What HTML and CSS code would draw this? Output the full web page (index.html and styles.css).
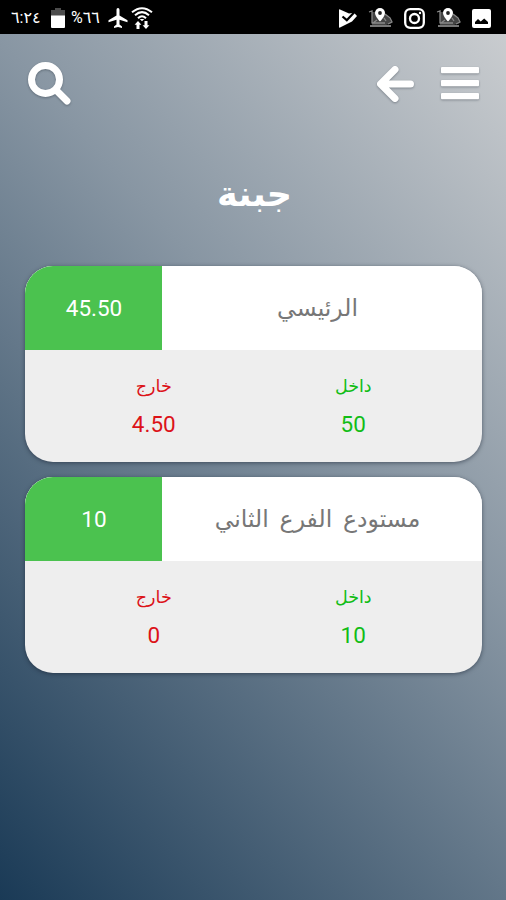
FILE: index.html
```html
<!DOCTYPE html>
<html lang="ar" dir="rtl">
<head>
<meta charset="utf-8">
<title>جبنة</title>
<link rel="stylesheet" href="styles.css">
</head>
<body>
<div class="status">
  <div class="status-group">
    <span class="time">٦:٢٤</span>
    <svg class="battery" width="14" height="20" viewBox="0 0 14 20"><path fill="#4c4c4c" d="M4 0h6v2h4v6H0V2h4z"/><path fill="#fff" d="M0 7.500h14V19a1 1 0 0 1-1 1H1a1 1 0 0 1-1-1z"/></svg>
    <span class="percent">%٦٦</span>
    <svg class="plane" width="20" height="20" viewBox="0 0 20 20"><path fill="#fff" d="M10 0c.9 0 1.500.9 1.500 2v5.500l8 4.800v2l-8-2.500v4.800l2.500 1.900V20l-4-1.100L6 20v-1.500l2.500-1.900v-4.800l-8 2.500v-2l8-4.800V2C8.500.9 9.100 0 10 0z"/></svg>
    <svg class="wifi" width="22" height="23" viewBox="0 0 22 23"><g fill="none" stroke="#fff" stroke-width="2"><path d="M1 5.300Q11-2.900 21 5.300"/><path d="M4 8.300Q11 2 18 8.300"/><path d="M7 11.200Q11 7.200 15 11.200"/></g><path fill="#fff" d="M8.800 12h4.400L11 14.300zM7 14l3.400 3.700H8.500v4.300H5.500v-4.300H3.600zM13.500 14h3v4.300h1.900L15 22l-3.400-3.700h1.900z"/></svg>
  </div>
  <div class="status-group notices">
    <svg width="18" height="19" viewBox="0 0 18 19"><path fill="#fff" d="M0 1Q0 0 1 .4L10 4.500 15 3.800 18 7 13 12.500 1 18.600Q0 19 0 18z"/><path fill="none" stroke="#000" stroke-width="2.200" d="M3.500 7.500l4.300 3.700L15.500 3"/></svg>
    <svg width="25" height="20" viewBox="0 0 25 20"><use href="#map-pin"/></svg>
    <svg width="21" height="21" viewBox="0 0 21 21"><rect x="1.200" y="1.200" width="18.600" height="18.600" rx="5" fill="none" stroke="#fff" stroke-width="2.300"/><circle cx="10.500" cy="10.500" r="4.500" fill="none" stroke="#fff" stroke-width="2.300"/><circle cx="16" cy="5" r="1.200" fill="#fff"/></svg>
    <svg width="25" height="20" viewBox="0 0 25 20"><use href="#map-pin"/></svg>
    <svg width="19" height="19" viewBox="0 0 19 19"><rect width="19" height="19" rx="2" fill="#fff"/><path d="M3 15v-2l3-3 2.700 2.500 3.500-3 3.800 3.500v2z"/></svg>
  </div>
</div>

<svg class="defs" width="0" height="0"><defs><g id="map-pin"><path fill="#777" d="M2 17h21v2H2z"/><path fill="#444" d="M4 4h5l3 7 5-5 5 5 2 4-6 2H4z"/><path fill="none" stroke="#888" stroke-width="1.300" d="M1 4l3-1v12M17 6l5 4 2 4-4 2M9 12l-4 3h12M16 10l2 3"/><path fill="#fff" d="M12 0a5 5 0 0 1 5 5c0 3.500-5 8.500-5 8.500S7 8.500 7 5a5 5 0 0 1 5-5z"/><circle cx="12" cy="5" r="1.900" fill="#222"/></g></defs></svg>

<main class="screen">
  <header class="toolbar">
    <svg class="icon" width="38" height="34" viewBox="0 0 38 34"><g fill="#fff"><rect width="38" height="6.300" rx="1"/><rect y="13" width="38" height="6.300" rx="1"/><rect y="26" width="38" height="6.300" rx="1"/></g></svg>
    <svg class="icon arrow" width="38" height="38" viewBox="0 0 38 38"><path fill="none" stroke="#fff" stroke-width="7" stroke-linecap="round" stroke-linejoin="round" d="M19 4.500L4.500 19 19 33.500M5 19h29.500"/></svg>
    <svg class="icon search" width="44" height="44" viewBox="0 0 44 44"><circle cx="17.500" cy="17.500" r="14" fill="none" stroke="#fff" stroke-width="7"/><path stroke="#fff" stroke-width="7" stroke-linecap="round" d="M28.500 28.500l10.500 10.500"/></svg>
  </header>
  <h1 class="title">جبنة</h1>
  <section class="card">
    <div class="card-head">
      <h2 class="name">الرئيسي</h2>
      <div class="total">45.50</div>
    </div>
    <div class="card-body">
      <div class="flow in"><span class="label">داخل</span><span class="value">50</span></div>
      <div class="flow out"><span class="label">خارج</span><span class="value">4.50</span></div>
    </div>
  </section>
  <section class="card">
    <div class="card-head">
      <h2 class="name">مستودع الفرع الثاني</h2>
      <div class="total">10</div>
    </div>
    <div class="card-body">
      <div class="flow in"><span class="label">داخل</span><span class="value">10</span></div>
      <div class="flow out"><span class="label">خارج</span><span class="value">0</span></div>
    </div>
  </section>
</main>
</body>
</html>
```
FILE: styles.css
```css
* { box-sizing: border-box; }
body {
  margin: 0;
  height: 900px;
  display: flex;
  flex-direction: column;
  overflow: hidden;
  font-family: Roboto, "DejaVu Sans", sans-serif;
}
.defs { position: absolute; }
.status {
  direction: ltr;
  height: 34px;
  flex: none;
  background: #000;
  color: #fff;
  display: flex;
  justify-content: space-between;
  align-items: center;
  padding: 2px 15px 0 11px;
}
.status-group { display: flex; align-items: center; }
.time, .percent {
  font-size: 16px;
  line-height: 20px;
  white-space: nowrap;
  unicode-bidi: bidi-override;
}
.time { width: 40px; }
.percent { width: 32px; margin-left: 6px; }
.plane { margin-left: 5px; }
.wifi { margin-left: 3px; }
.notices { gap: 11px; }
.notices svg { flex: none; }
.screen {
  flex: 1;
  background: linear-gradient(228deg, #c9cccf, #8896a3 40%, #1a3a56);
  padding: 0 24px 0 25px;
}
.toolbar {
  height: 99px;
  display: flex;
  align-items: center;
  padding: 0 3px;
}
.icon { filter: drop-shadow(0 1.500px 1px rgba(40, 50, 60, .4)); }
.arrow { margin-right: 27px; }
.search { margin-right: auto; }
.title {
  margin: 0;
  height: 133px;
  padding: 37px 0 0 2px;
  color: #fff;
  font-size: 35px;
  line-height: 50px;
  text-align: center;
}
.card {
  height: 196px;
  margin-bottom: 15px;
  border-radius: 28px;
  overflow: hidden;
  background: #eee;
  box-shadow: 0 1px 4px rgba(20, 30, 45, .55);
}
.card-head { height: 84px; display: flex; background: #fff; }
.name {
  flex: 1;
  margin: 0;
  padding-right: 9px;
  color: #777;
  font-size: 23.500px;
  font-weight: 400;
  line-height: 84px;
  word-spacing: 5px;
  text-align: center;
}
.total {
  width: 137px;
  padding-left: 1px;
  background: #4bc24f;
  color: #fff;
  font-size: 22.500px;
  line-height: 84px;
  text-align: center;
}
.card-body { display: flex; padding: 20px 29px 0; }
.flow { flex: 1; display: flex; flex-direction: column; text-align: center; }
.in { color: #12bd16; }
.out { color: #dc1218; }
.label { font-size: 17.500px; line-height: 32px; }
.value { font-size: 22.500px; line-height: 44px; }
```
